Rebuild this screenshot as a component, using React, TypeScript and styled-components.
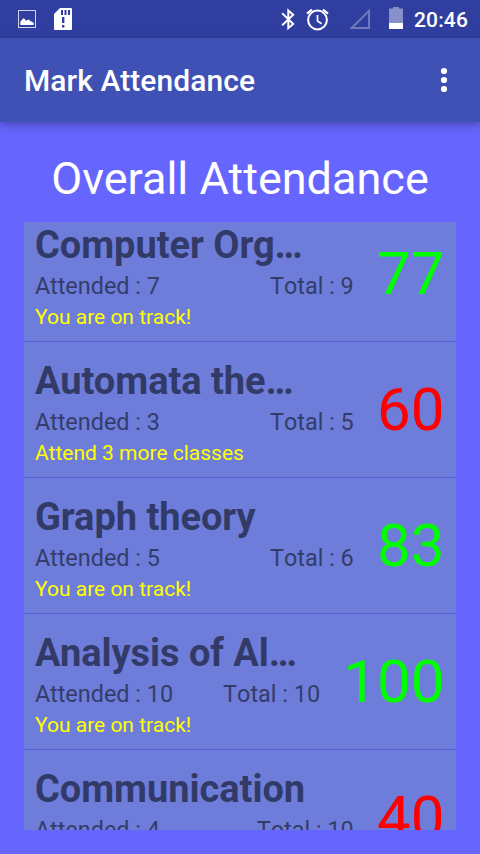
import React from "react";
import styled, { createGlobalStyle } from "styled-components";

const GlobalStyle = createGlobalStyle`
  *, *::before, *::after { box-sizing: border-box; }
  body {
    margin: 0;
    background: #6666ff;
    font-family: Roboto, "Noto Sans", sans-serif;
  }
`;

const Screen = styled.div`
  display: flex;
  flex-direction: column;
  width: 480px;
  height: 854px;
  overflow: hidden;
  background: #6666ff;
`;

const StatusBar = styled.header`
  display: flex;
  align-items: center;
  flex: none;
  height: 38px;
  padding: 0 12px 0 16px;
  background: #303f9f;
  color: #fff;
`;

const StatusIcon = styled.svg<{ $gap: number }>`
  display: block;
  flex: none;
  margin-left: ${(p) => p.$gap}px;
`;

const Spacer = styled.div`
  flex: 1;
`;

const Clock = styled.span`
  margin-left: 11px;
  padding-top: 2px;
  font-size: 21px;
  font-weight: 500;
  line-height: 38px;
  letter-spacing: 0.15px;
`;

const Toolbar = styled.div`
  display: flex;
  align-items: center;
  justify-content: space-between;
  flex: none;
  height: 84px;
  padding: 0 30px 0 24px;
  background: #3f51b5;
  box-shadow: 0 3px 9px rgba(0, 0, 0, 0.3);
`;

const ToolbarTitle = styled.h1`
  margin: 0;
  padding-top: 2px;
  color: #fff;
  font-size: 30px;
  font-weight: 500;
  line-height: 40px;
  letter-spacing: 0.07px;
`;

const MenuButton = styled.button`
  display: block;
  padding: 0;
  border: 0;
  background: none;
  svg { display: block; }
`;

const Heading = styled.h2`
  flex: none;
  height: 100px;
  margin: 0;
  padding-top: 25px;
  color: #fff;
  font-size: 45px;
  font-weight: 400;
  line-height: 64px;
  text-align: center;
  white-space: nowrap;
`;

const List = styled.ul`
  flex: none;
  height: 608px;
  margin: 0 24px;
  padding: 0;
  overflow: hidden;
  list-style: none;
  background: #6e7dda;
`;

const Row = styled.li`
  display: flex;
  height: 136px;
  padding: 16px 11.5px 0 11px;
  border-bottom: 1px solid #565fd9;
  &:first-child {
    height: 120px;
    padding-top: 0;
  }
`;

const Details = styled.div`
  flex: 1;
  min-width: 0;
  margin-right: 23.3px;
`;

const Subject = styled.div`
  color: #323a67;
  font-size: 38px;
  font-weight: 700;
  line-height: 46px;
  letter-spacing: -0.04px;
  white-space: nowrap;
`;

const Counts = styled.div`
  display: flex;
  justify-content: space-between;
  color: #343c6a;
  font-size: 23.4px;
  line-height: 36px;
  white-space: nowrap;
`;

const Total = styled.span`
  font-kerning: none;
`;

const Advice = styled.div`
  color: #ffff00;
  font-size: 21px;
  line-height: 26px;
`;

const Percent = styled.div<{ $good: boolean }>`
  flex: none;
  padding-top: 16px;
  color: ${(p) => (p.$good ? "#00ff00" : "#ff0000")};
  font-size: 60px;
  line-height: 71px;
`;

const subjects = [
  { name: "Computer Org…", attended: 7, total: 9, advice: "You are on track!", percent: 77, good: true },
  { name: "Automata the…", attended: 3, total: 5, advice: "Attend 3 more classes", percent: 60, good: false },
  { name: "Graph theory", attended: 5, total: 6, advice: "You are on track!", percent: 83, good: true },
  { name: "Analysis of Al…", attended: 10, total: 10, advice: "You are on track!", percent: 100, good: true },
  { name: "Communication", attended: 4, total: 10, advice: "", percent: 40, good: false },
];

export default function App() {
  return (
    <>
      <GlobalStyle />
      <Screen>
        <StatusBar>
          <StatusIcon $gap={1} width="20" height="38" viewBox="0 0 20 38">
            <rect x="1.5" y="10.5" width="17" height="17" fill="none" stroke="#d0d4ec" />
            <path d="M3.3 25v-3.2l2.8-3.2h1.2l1.5 2.2 2.2-1h1.2l1.5 1.7h1l2 1.5v2z" fill="#fff" />
          </StatusIcon>
          <StatusIcon $gap={17} width="18" height="38" viewBox="0 0 18 38">
            <path d="M6 8h11q1 0 1 1v20q0 1-1 1H1q-1 0-1-1V14z" fill="#fff" />
            <path d="M7 10h2v5H7zM10.5 10h2v5h-2zM14 10h2v5h-2zM8 17h2.4v6H8zM8 25h2.4v2.4H8z" fill="#303f9f" />
          </StatusIcon>
          <Spacer />
          <StatusIcon $gap={0} width="14" height="38" viewBox="0 0 14 38">
            <path d="M1.2 13.2 12.2 24 7.3 28.2V10.5l4.9 4.2-11 10.5" fill="none" stroke="#fff" strokeWidth="2" />
          </StatusIcon>
          <StatusIcon $gap={11} width="24" height="38" viewBox="0 0 24 38">
            <circle cx="11.5" cy="20" r="9.4" fill="none" stroke="#fff" strokeWidth="2" />
            <path d="M11.5 15v6l4.2 2.7" fill="none" stroke="#fff" strokeWidth="1.7" />
            <path d="M1 13.6 6 9.6M22 13.6l-5-4" stroke="#fff" strokeWidth="2.2" />
          </StatusIcon>
          <StatusIcon $gap={19} width="22" height="38" viewBox="0 0 22 38">
            <path d="M2.7 28 20 10.8V28z" fill="none" stroke="#7079bb" strokeWidth="2" />
          </StatusIcon>
          <StatusIcon $gap={18} width="14" height="38" viewBox="0 0 14 38">
            <path d="M4 7h6v1.5h4V23H0V8.5h4z" fill="#8790c8" />
            <path d="M0 23h14v6H0z" fill="#fff" />
          </StatusIcon>
          <Clock>20:46</Clock>
        </StatusBar>
        <Toolbar>
          <ToolbarTitle>Mark Attendance</ToolbarTitle>
          <MenuButton aria-label="More options">
            <svg width="12" height="26" viewBox="0 0 12 26" fill="#fff">
              <circle cx="6" cy="4" r="3.1" />
              <circle cx="6" cy="13" r="3.1" />
              <circle cx="6" cy="22" r="3.1" />
            </svg>
          </MenuButton>
        </Toolbar>
        <Heading>Overall Attendance</Heading>
        <List>
          {subjects.map((s) => (
            <Row key={s.name}>
              <Details>
                <Subject>{s.name}</Subject>
                <Counts>
                  <span>Attended : {s.attended}</span>
                  <Total>Total : {s.total}</Total>
                </Counts>
                <Advice>{s.advice}</Advice>
              </Details>
              <Percent $good={s.good}>{s.percent}</Percent>
            </Row>
          ))}
        </List>
      </Screen>
    </>
  );
}
